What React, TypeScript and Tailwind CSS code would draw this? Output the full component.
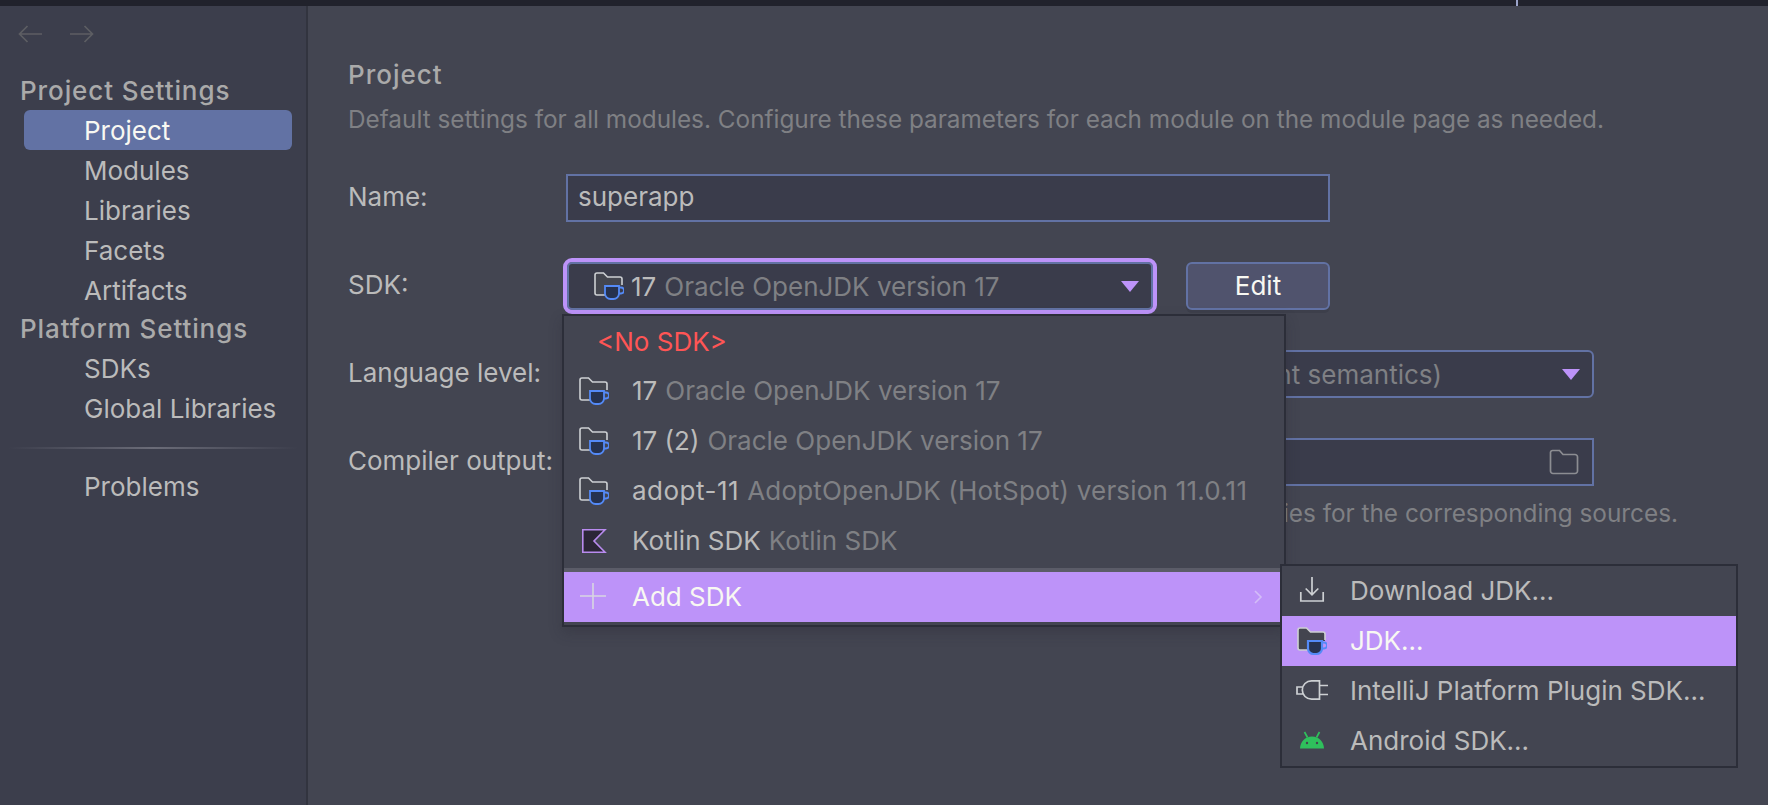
import React from "react";

const font = { fontFamily: "Inter, 'Noto Sans', sans-serif" };

function JdkIcon({ selected = false }: { selected?: boolean }) {
  return (
    <svg width="30" height="30" viewBox="0 0 30 30" fill="none" className="shrink-0">
      <path
        d="M1 22V4A2 2 0 0 1 3 2H9.500L13.500 6H26A2 2 0 0 1 28 8V15H12V24H3A2 2 0 0 1 1 22Z"
        fill={selected ? "#43454f" : "#44464f"}
      />
      <path
        d="M12 24H3A2 2 0 0 1 1 22V4A2 2 0 0 1 3 2H9.500L13.500 6H26A2 2 0 0 1 28 8V14"
        stroke="#cdd0d3"
        strokeWidth="1.600"
        fill="none"
      />
      <path
        d="M11 15H25V22.500A5.500 5.500 0 0 1 19.500 28H16.500A5.500 5.500 0 0 1 11 22.500Z"
        fill="#26324f"
        stroke="#548af7"
        strokeWidth={selected ? "2.200" : "1.800"}
      />
      <path d="M25 16.500H27A2.400 2.400 0 0 1 27 22.500H25" stroke="#548af7" strokeWidth="1.800" fill="none" />
    </svg>
  );
}

function KotlinIcon() {
  return (
    <svg width="30" height="30" viewBox="0 0 30 30" fill="none" className="shrink-0">
      <path d="M3.800 3.800H26L15 15L26 26.200H3.800Z" fill="#2b2636" stroke="#b98bef" strokeWidth="1.600" />
    </svg>
  );
}

function Plus() {
  return (
    <svg width="30" height="30" viewBox="0 0 30 30" fill="none" className="shrink-0 -mt-[3px]">
      <path d="M14 2V28M1 15H27" stroke="#d8d6e2" strokeWidth="1.600" />
    </svg>
  );
}

function DownloadIcon() {
  return (
    <svg width="30" height="30" viewBox="0 0 30 30" fill="none" className="shrink-0">
      <path d="M15 1V18.500M8.700 12.500L15 18.800L21.300 12.500M3.800 16V25H26.200V16" stroke="#cdd0d3" strokeWidth="1.700" />
    </svg>
  );
}

function PluginIcon() {
  return (
    <svg width="32" height="30" viewBox="0 0 32 30" fill="none" className="shrink-0">
      <path
        d="M7.500 11H1V18H7.500M32 9.500H23.500M32 18.500H23.500M23.500 4.800H15.500A9.200 9.200 0 0 0 15.500 23.200H23.500Z"
        stroke="#cdd0d3"
        strokeWidth="1.700"
      />
    </svg>
  );
}

function AndroidIcon() {
  return (
    <svg width="30" height="30" viewBox="0 0 30 30" fill="none" className="shrink-0">
      <path d="M3 22.500C3.300 15.500 8 10.500 15 10.500C22 10.500 26.700 15.500 27 22.500Z" fill="#2fc05c" />
      <path d="M7.500 6L10.500 11.500M22.500 6L19.500 11.500" stroke="#2fc05c" strokeWidth="1.700" />
      <circle cx="10" cy="17" r="1.200" fill="#43454f" />
      <circle cx="20" cy="17" r="1.200" fill="#43454f" />
    </svg>
  );
}

function Caret({ color = "#bd93f9" }: { color?: string }) {
  return (
    <svg width="18" height="11" viewBox="0 0 18 11" className="shrink-0">
      <path d="M0 0H18L9 11Z" fill={color} />
    </svg>
  );
}

function NavItem({ label, selected = false }: { label: string; selected?: boolean }) {
  return (
    <div
      className={
        selected
          ? "ml-[24px] mr-[14px] h-[40px] shrink-0 rounded-[6px] bg-[#6272a4] pl-[60px] pt-[2px] flex items-center text-[#f8f8f2]"
          : "ml-[24px] mr-[14px] h-[40px] shrink-0 pl-[60px] flex items-center text-[#bbbbbb]"
      }
    >
      {label}
    </div>
  );
}

function Sidebar() {
  return (
    <div className="w-[308px] shrink-0 bg-[#3c3e4c] border-r-2 border-[#32343f] flex flex-col text-[26px] leading-none">
      <div className="h-[56px] shrink-0 flex items-center gap-[28px] pl-[18px]">
        <svg width="24" height="18" viewBox="0 0 24 18" fill="none">
          <path d="M24 9H1.500M9.500 1L1.500 9L9.500 17" stroke="#5d5e63" strokeWidth="1.700" />
        </svg>
        <svg width="24" height="18" viewBox="0 0 24 18" fill="none">
          <path d="M0 9H22.500M14.500 1L22.500 9L14.500 17" stroke="#5d5e63" strokeWidth="1.700" />
        </svg>
      </div>
      <div className="h-[48px] shrink-0 pt-[10px] pl-[20px] font-medium tracking-[0.9px] text-[#aaaaaa] flex items-center">
        Project Settings
      </div>
      <NavItem label="Project" selected />
      <div className="h-[1px] shrink-0" />
      <NavItem label="Modules" />
      <NavItem label="Libraries" />
      <NavItem label="Facets" />
      <NavItem label="Artifacts" />
      <div className="h-[38px] shrink-0 pb-[2px] pl-[20px] font-medium tracking-[0.9px] text-[#aaaaaa] flex items-center">
        Platform Settings
      </div>
      <NavItem label="SDKs" />
      <NavItem label="Global Libraries" />
      <div className="mx-[8px] mt-[18px] mb-[18px] h-[2px] shrink-0 bg-gradient-to-r from-[#3c3e4c] via-[#6b6c78] to-[#3c3e4c]" />
      <NavItem label="Problems" />
    </div>
  );
}

function Row({ label, children, className }: { label: string; children: React.ReactNode; className: string }) {
  return (
    <div className={"flex items-center " + className}>
      <div className="w-[215px] shrink-0 text-[#bbbbbb] -mt-[2px]">{label}</div>
      {children}
    </div>
  );
}

function Main() {
  return (
    <div className="flex-1 bg-[#434551] pl-[40px] pt-[54px] text-[26px] leading-none">
      <div className="h-[28px] pt-[2px] flex items-center font-medium tracking-[1px] text-[#aaaaaa]">Project</div>
      <div className="mt-[17px] h-[28px] flex items-center text-[#7f8084] text-[24.330px] whitespace-nowrap">
        Default settings for all modules. Configure these parameters for each module on the module page as needed.
      </div>
      <Row label="Name:" className="mt-[41px] h-[48px]">
        <div className="ml-[3px] w-[764px] h-[48px] bg-[#3a3c4b] border-2 border-[#6272a4] pl-[10px] pb-[2px] flex items-center text-[#bbbbbb]">
          superapp
        </div>
      </Row>
      <Row label="SDK:" className="mt-[36px] h-[56px]">
        <div className="w-[594px] h-[56px] rounded-[9px] border-[4px] border-[#bd93f9] bg-[#3a3c4b] flex items-center pl-[27px] pr-[14px] shadow-[inset_0_0_0_2px_#6272a4]">
          <JdkIcon />
          <span className="ml-[7px] mt-[2px] text-[#bbbbbb]">17</span>
          <span className="ml-[8px] mt-[2px] text-[#7f8084]">Oracle OpenJDK version 17</span>
          <span className="ml-auto">
            <Caret />
          </span>
        </div>
        <div className="ml-[29px] w-[144px] h-[48px] rounded-[6px] border-2 border-[#6272a4] bg-[#50536d] flex items-center justify-center text-[#f8f8f2] shadow-[0_3px_0_#3d3f4b]">
          Edit
        </div>
      </Row>
      <Row label="Language level:" className="mt-[36px] h-[48px]">
        <div className="ml-[3px] w-[1028px] h-[48px] rounded-[6px] border-2 border-[#6272a4] bg-[#3a3c4b] flex items-center justify-end pr-[12px] text-[#7f8084]">
          <span className="mr-[120px] mt-[2px] whitespace-nowrap">nt semantics)</span>
          <Caret />
        </div>
      </Row>
      <Row label="Compiler output:" className="mt-[40px] h-[48px]">
        <div className="ml-[3px] w-[1028px] h-[48px] border-2 border-[#6272a4] bg-[#3a3c4b] flex items-center justify-end pr-[13px]">
          <svg width="30" height="26" viewBox="0 0 30 26" fill="none">
            <path
              d="M1.500 3.500A2 2 0 0 1 3.500 1.500H10.500L14 5.500H26A2.500 2.500 0 0 1 28.500 8V22A2.500 2.500 0 0 1 26 24.500H4A2.500 2.500 0 0 1 1.500 22Z"
              stroke="#8c8d92"
              strokeWidth="1.700"
            />
          </svg>
        </div>
      </Row>
      <div className="mt-[15px] h-[24px] w-[1330px] flex items-center justify-end whitespace-nowrap text-[#7f8084] text-[24.330px]">
        ies for the corresponding sources.
      </div>
    </div>
  );
}

function MenuRow({
  icon,
  name,
  detail,
  selected = false,
  pl = "pl-[15px]",
  gap = "ml-[23px]",
  arrow = false,
  nameClass = "",
  detailClass = "",
}: {
  icon?: React.ReactNode;
  name: string;
  detail?: string;
  selected?: boolean;
  pl?: string;
  gap?: string;
  arrow?: boolean;
  nameClass?: string;
  detailClass?: string;
}) {
  return (
    <div className={`flex items-center whitespace-nowrap h-[50px] ${pl} ${selected ? "bg-[#bd93f9]" : ""}`}>
      {icon}
      <span className={`${gap} ${nameClass} ${selected ? "text-[#f8f8f2]" : "text-[#bbbbbb]"}`}>{name}</span>
      {detail && <span className={`ml-[8px] text-[#7f8084] ${detailClass}`}>{detail}</span>}
      {arrow && (
        <svg width="10" height="16" viewBox="0 0 10 16" fill="none" className="ml-auto mr-[21px]">
          <path d="M2 2L8 8L2 14" stroke="#d3bdf7" strokeWidth="1.600" />
        </svg>
      )}
    </div>
  );
}

function Popups() {
  return (
    <>
      <div className="absolute left-[562px] top-[314px] w-[724px] h-[313px] bg-[#434551] border-2 border-[#2c2e39] shadow-[0_6px_12px_rgba(35,36,46,0.25)] text-[26px] leading-none">
        <div className="h-[50px] pl-[33px] pt-[2px] flex items-center text-[#ff5555]">&lt;No SDK&gt;</div>
        <MenuRow icon={<JdkIcon />} name="17" detail="Oracle OpenJDK version 17" />
        <MenuRow icon={<JdkIcon />} name="17 (2)" detail="Oracle OpenJDK version 17" />
        <MenuRow
          icon={<JdkIcon />}
          name="adopt-11"
          detail="AdoptOpenJDK (HotSpot) version 11.0.11"
          nameClass="tracking-[0.5px]"
          detailClass="tracking-[0.2px]"
        />
        <MenuRow icon={<KotlinIcon />} name="Kotlin SDK" detail="Kotlin SDK" />
        <div className="h-[4px] bg-[#5b5c68] mt-[2px]" />
        <MenuRow icon={<Plus />} name="Add SDK" selected arrow />
      </div>
      <div className="absolute left-[1280px] top-[564px] w-[458px] h-[204px] bg-[#434551] border-2 border-[#2c2e39] text-[26px] leading-none">
        <MenuRow icon={<DownloadIcon />} name="Download JDK..." />
        <MenuRow icon={<JdkIcon selected />} name="JDK..." selected />
        <MenuRow icon={<PluginIcon />} name="IntelliJ Platform Plugin SDK..." pl="pl-[14px]" gap="ml-[22px]" />
        <MenuRow icon={<AndroidIcon />} name="Android SDK..." />
      </div>
    </>
  );
}

export default function App() {
  return (
    <div className="relative w-[1768px] h-[805px] overflow-hidden flex flex-col bg-[#434551]" style={font}>
      <div className="h-[6px] shrink-0 bg-[#21222c] flex">
        <div className="ml-[1516px] w-[2px] bg-[#9ba3c9]" />
      </div>
      <div className="flex-1 flex min-h-0">
        <Sidebar />
        <Main />
      </div>
      <Popups />
    </div>
  );
}
